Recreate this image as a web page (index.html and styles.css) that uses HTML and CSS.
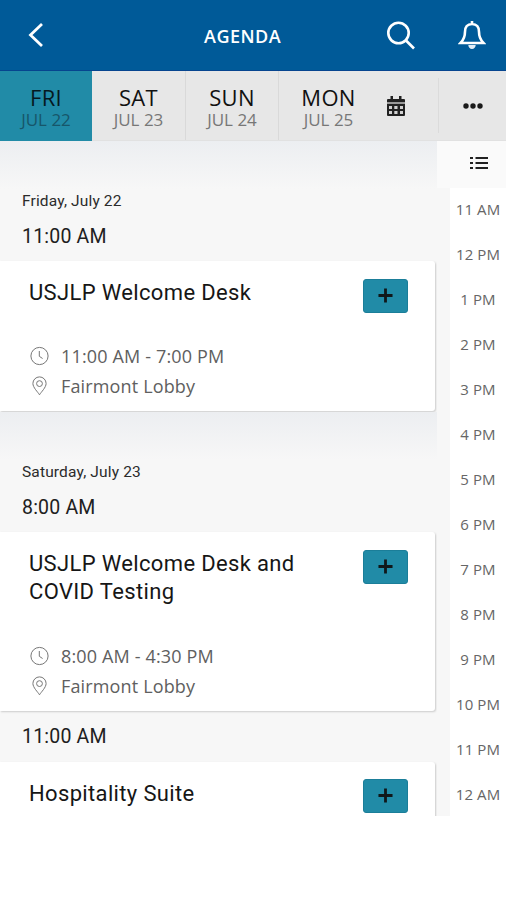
FILE: index.html
```html
<!DOCTYPE html>
<html lang="en">
<head>
<meta charset="utf-8">
<title>Agenda</title>
<link rel="stylesheet" href="styles.css">
</head>
<body>
<svg class="defs">
  <symbol id="clock" viewBox="0 0 20 20"><circle cx="10" cy="10" r="8.6"/><path d="M9.8 5v5.3l3.3 2.2"/></symbol>
  <symbol id="pin" viewBox="0 0 20 20"><path d="M10 18.800C8.500 16.200 3.400 11.500 3.400 7.500a6.600 6.600 0 0 1 13.200 0C16.600 11.500 11.500 16.200 10 18.800z"/><circle cx="10" cy="7.600" r="2.900"/></symbol>
  <symbol id="plus" viewBox="0 0 16 16"><path d="M8 .5v15M.5 8h15"/></symbol>
</svg>
<div class="app">
  <header class="topbar">
    <svg class="back" viewBox="0 0 16 26"><path d="M14 2 2.500 13 14 24"/></svg>
    <h1>AGENDA</h1>
    <svg class="search" viewBox="0 0 30 30"><circle cx="12.500" cy="12" r="10.200"/><path d="m20 19.500 8 8"/></svg>
    <svg class="bell" viewBox="0 0 28 32"><path d="M14 5c-4.700 0-7 3.300-7 7.700 0 6-1.500 8.300-4.500 11.300h23c-3-3-4.500-5.300-4.500-11.300 0-4.400-2.300-7.700-7-7.700zM14 2v3"/><path class="solid" d="M10.300 26h7.400c0 2.300-1.600 4-3.700 4s-3.700-1.700-3.700-4z"/></svg>
  </header>
  <nav class="tabs">
    <div class="tab active"><b>FRI</b><span>JUL 22</span></div>
    <div class="tab"><b>SAT</b><span>JUL 23</span></div>
    <div class="tab"><b>SUN</b><span>JUL 24</span></div>
    <div class="tab last"><b>MON</b><span>JUL 25</span></div>
    <svg class="calendar" viewBox="0 0 18 20"><path d="M0 6V4q0-1 1-1h2.500V0h2.500v3h6V0h2.500v3H17q1 0 1 1v2zM0 8h18v11q0 1-1 1H1q-1 0-1-1z"/><path class="bar" d="M0 6h18v2H0z"/><path class="cells" d="M2 10h3v3H2zm5.300 0h3.200v3H7.300zm5.700 0h3v3h-3zM2 15h3v3H2zm5.300 0h3.200v3H7.300zm5.700 0h3v3h-3z"/></svg>
    <div class="more"><svg viewBox="0 0 20 6"><circle cx="3" cy="3" r="2.700"/><circle cx="10" cy="3" r="2.700"/><circle cx="17" cy="3" r="2.700"/></svg></div>
  </nav>
  <main>
    <div class="schedule">
      <section>
        <h2>Friday, July 22</h2>
        <h3>11:00 AM</h3>
        <article class="card">
          <div class="title-row"><h4>USJLP Welcome Desk</h4><button><svg><use href="#plus"/></svg></button></div>
          <p><svg><use href="#clock"/></svg><span>11:00 AM - 7:00 PM</span></p>
          <p><svg><use href="#pin"/></svg><span>Fairmont Lobby</span></p>
        </article>
      </section>
      <section>
        <h2>Saturday, July 23</h2>
        <h3>8:00 AM</h3>
        <article class="card tall">
          <div class="title-row"><h4>USJLP Welcome Desk and<br>COVID Testing</h4><button><svg><use href="#plus"/></svg></button></div>
          <p><svg><use href="#clock"/></svg><span>8:00 AM - 4:30 PM</span></p>
          <p><svg><use href="#pin"/></svg><span>Fairmont Lobby</span></p>
        </article>
        <h3 class="next">11:00 AM</h3>
        <article class="card partial">
          <div class="title-row"><h4>Hospitality Suite</h4><button><svg><use href="#plus"/></svg></button></div>
        </article>
      </section>
    </div>
    <aside>
      <div class="list-toggle"><svg viewBox="0 0 18 14"><path d="M0 2h3M0 7h3M0 12h3M5.500 2H18M5.500 7H18M5.500 12H18"/></svg></div>
      <ol>
        <li>11 AM</li><li>12 PM</li><li>1 PM</li><li>2 PM</li><li>3 PM</li><li>4 PM</li><li>5 PM</li><li>6 PM</li><li>7 PM</li><li>8 PM</li><li>9 PM</li><li>10 PM</li><li>11 PM</li><li>12 AM</li>
      </ol>
    </aside>
  </main>
</div>
</body>
</html>
```
FILE: styles.css
```css
* { box-sizing: border-box; }
body { margin: 0; background: #fff; font-family: "Open Sans", sans-serif; color: #161616; }
h1, h2, h3, h4, p, ol { margin: 0; padding: 0; }
svg { flex: none; fill: none; }
.app { display: flex; flex-direction: column; width: 506px; height: 816px; overflow: hidden; }
.defs { width: 0; height: 0; position: absolute; }

.topbar { display: flex; align-items: center; height: 71px; flex: none; background: #005a98; border-bottom: 1px solid #06458f; color: #fff; padding-left: 28px; }
.topbar svg { stroke: #fff; }
.back { width: 16px; height: 26px; stroke-width: 2.8; }
h1 { flex: 1; padding: 1px 0 0 160px; font-size: 18px; line-height: 24px; font-weight: 600; letter-spacing: 0.5px; }
.search { width: 30px; height: 30px; stroke-width: 2.6; margin: 1px 42px 0 0; }
.bell { width: 28px; height: 32px; stroke-width: 2.6; margin-right: 20px; }
.bell .solid { fill: #e3edf6; stroke: none; }

.tabs { display: flex; height: 70px; flex: none; background: #e7e7e7; border-bottom: 1px solid #e1e1e1; align-items: stretch; }
.tab { width: 93px; display: flex; flex-direction: column; align-items: center; padding-top: 13px; border-right: 1px solid #d9d9d9; }
.tab b { font-size: 22px; line-height: 27px; font-weight: 400; color: #111; letter-spacing: 0.3px; }
.tab span { font-size: 17px; line-height: 17px; color: #777; }
.tab.active { width: 92px; height: 70px; background: #218ba7; border-right: 0; }
.tab.active b { color: #06191f; }
.tab.active span { color: #17566a; }
.tab.active + .tab { width: 94px; }
.tab.last { width: 99px; border-right: 0; }
.calendar { width: 18px; height: 20px; margin: 25px 0 0 9px; fill: #222; }
.calendar .bar { fill: #999; }
.calendar .cells { fill: #d2d2d2; }
.more { flex: 1; display: flex; align-items: center; justify-content: center; border-left: 1px solid #dbdbdb; margin: 7px -1px 7px 33px; }
.more svg { width: 20px; height: 6px; fill: #1a1a1a; }

main { display: flex; flex: 1; min-height: 0; background: #f7f7f7; }
.schedule { width: 437px; overflow: hidden; }
section { background: linear-gradient(#eceef1, #f7f7f7 48px); padding-top: 48px; font-family: Roboto, sans-serif; }
section:first-child { height: 271px; }
h2 { font-size: 15.5px; line-height: 24px; font-weight: 400; padding-left: 22px; letter-spacing: 0.15px; color: #2b2b2b; }
h3 { font-size: 19.5px; line-height: 30px; font-weight: 400; padding: 9px 0 9px 22px; letter-spacing: 0.2px; color: #202020; }
h3.next { padding: 11px 0 9px 22px; height: 51px; }
.card { width: 435px; height: 150px; background: #fff; border-radius: 0 3px 3px 0; box-shadow: 1px 1px 2px #ccc; padding: 17px 27px 0 29px; }
.card.tall { height: 179px; }
.title-row { display: flex; justify-content: space-between; height: 63px; }
.tall .title-row { height: 92px; }
h4 { font-size: 22px; line-height: 28px; font-weight: 400; letter-spacing: 0.35px; padding-top: 1px; color: #161616; }
button { width: 45px; height: 34px; margin-top: 1px; border: 1px solid #1b7e99; border-radius: 3px; background: #218ba7; padding: 0; display: flex; align-items: center; justify-content: center; }
.partial button { margin-top: 0; }
button svg { width: 15px; height: 15px; stroke: #10171a; stroke-width: 3; margin-top: -1px; }
.card p { display: flex; align-items: center; height: 30px; gap: 11px; font-family: "Open Sans", sans-serif; font-size: 18px; letter-spacing: 0.15px; color: #606060; }
.card p svg { width: 21px; height: 20px; stroke: #777; stroke-width: 1; }

aside { flex: 1; }
.list-toggle { height: 47px; padding: 15px 0 0 33px; background: #fafafa; }
.list-toggle svg { display: block; width: 18px; height: 14px; stroke: #222; stroke-width: 2; }
ol { list-style: none; margin-left: 13px; background: #fff; height: 630px; }
li { height: 45px; line-height: 43px; text-align: center; font-size: 15px; letter-spacing: 0.1px; color: #666; }
```
